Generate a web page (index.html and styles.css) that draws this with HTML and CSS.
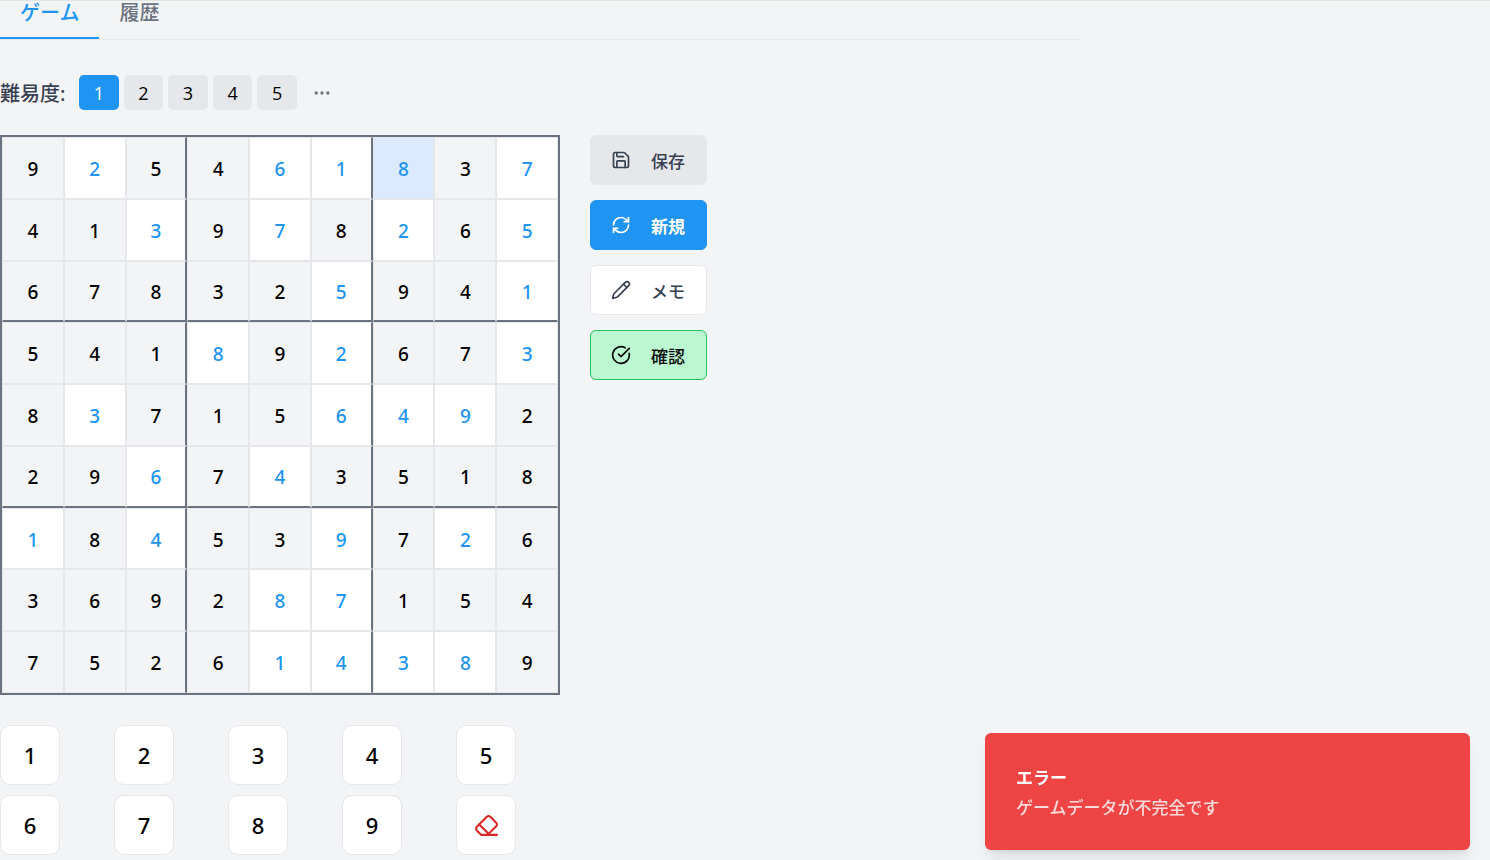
FILE: index.html
```html
<!DOCTYPE html>
<html lang="ja">
<head>
<meta charset="utf-8">
<meta name="viewport" content="width=device-width, initial-scale=1">
<title>数独</title>
<link rel="stylesheet" href="styles.css">
</head>
<body>
<div class="app">
  <nav class="tabs" role="tablist">
    <button class="tab tab-active" role="tab" aria-selected="true">ゲーム</button>
    <button class="tab" role="tab" aria-selected="false">履歴</button>
  </nav>

  <section class="difficulty" aria-labelledby="difficulty-label">
    <span id="difficulty-label" class="difficulty-label">難易度:</span>
    <div class="levels">
      <button class="level level-active">1</button>
      <button class="level">2</button>
      <button class="level">3</button>
      <button class="level">4</button>
      <button class="level">5</button>
    </div>
    <button class="more" aria-label="その他">
      <svg class="icon" viewBox="0 0 24 24"><circle cx="5" cy="12" r="1"/><circle cx="12" cy="12" r="1"/><circle cx="19" cy="12" r="1"/></svg>
    </button>
  </section>

  <main class="game">
    <div class="play">
      <div class="board">
        <button class="cell">9</button><button class="cell user">2</button><button class="cell">5</button><button class="cell">4</button><button class="cell user">6</button><button class="cell user">1</button><button class="cell user selected">8</button><button class="cell">3</button><button class="cell user">7</button>
        <button class="cell">4</button><button class="cell">1</button><button class="cell user">3</button><button class="cell">9</button><button class="cell user">7</button><button class="cell">8</button><button class="cell user">2</button><button class="cell">6</button><button class="cell user">5</button>
        <button class="cell">6</button><button class="cell">7</button><button class="cell">8</button><button class="cell">3</button><button class="cell">2</button><button class="cell user">5</button><button class="cell">9</button><button class="cell">4</button><button class="cell user">1</button>
        <button class="cell">5</button><button class="cell">4</button><button class="cell">1</button><button class="cell user">8</button><button class="cell">9</button><button class="cell user">2</button><button class="cell">6</button><button class="cell">7</button><button class="cell user">3</button>
        <button class="cell">8</button><button class="cell user">3</button><button class="cell">7</button><button class="cell">1</button><button class="cell">5</button><button class="cell user">6</button><button class="cell user">4</button><button class="cell user">9</button><button class="cell">2</button>
        <button class="cell">2</button><button class="cell">9</button><button class="cell user">6</button><button class="cell">7</button><button class="cell user">4</button><button class="cell">3</button><button class="cell">5</button><button class="cell">1</button><button class="cell">8</button>
        <button class="cell user">1</button><button class="cell">8</button><button class="cell user">4</button><button class="cell">5</button><button class="cell">3</button><button class="cell user">9</button><button class="cell">7</button><button class="cell user">2</button><button class="cell">6</button>
        <button class="cell">3</button><button class="cell">6</button><button class="cell">9</button><button class="cell">2</button><button class="cell user">8</button><button class="cell user">7</button><button class="cell">1</button><button class="cell">5</button><button class="cell">4</button>
        <button class="cell">7</button><button class="cell">5</button><button class="cell">2</button><button class="cell">6</button><button class="cell user">1</button><button class="cell user">4</button><button class="cell user">3</button><button class="cell user">8</button><button class="cell">9</button>
      </div>
      <div class="pad">
        <button class="key">1</button>
        <button class="key">2</button>
        <button class="key">3</button>
        <button class="key">4</button>
        <button class="key">5</button>
        <button class="key">6</button>
        <button class="key">7</button>
        <button class="key">8</button>
        <button class="key">9</button>
        <button class="key key-erase" aria-label="消去">
          <svg class="icon icon-large" viewBox="0 0 24 24"><path d="m7 21-4.3-4.3c-1-1-1-2.5 0-3.4l9.6-9.6c1-1 2.5-1 3.4 0l5.6 5.6c1 1 1 2.5 0 3.4L13 21"/><path d="M22 21H7"/><path d="m5 11 9 9"/></svg>
        </button>
      </div>
    </div>

    <div class="actions">
      <button class="action action-save">
        <svg class="icon" viewBox="0 0 24 24"><path d="M15.2 3a2 2 0 0 1 1.4.6l3.8 3.8a2 2 0 0 1 .6 1.4V19a2 2 0 0 1-2 2H5a2 2 0 0 1-2-2V5a2 2 0 0 1 2-2z"/><path d="M17 21v-7a1 1 0 0 0-1-1H8a1 1 0 0 0-1 1v7"/><path d="M7 3v4a1 1 0 0 0 1 1h7"/></svg>
        保存
      </button>
      <button class="action action-new">
        <svg class="icon" viewBox="0 0 24 24"><path d="M3 12a9 9 0 0 1 9-9 9.75 9.75 0 0 1 6.74 2.74L21 8"/><path d="M21 3v5h-5"/><path d="M21 12a9 9 0 0 1-9 9 9.75 9.75 0 0 1-6.74-2.74L3 16"/><path d="M8 16H3v5"/></svg>
        新規
      </button>
      <button class="action action-memo">
        <svg class="icon" viewBox="0 0 24 24"><path d="M21.174 6.812a1 1 0 0 0-3.986-3.987L3.842 16.174a2 2 0 0 0-.5.83l-1.321 4.352a.5.5 0 0 0 .623.622l4.353-1.32a2 2 0 0 0 .83-.497z"/><path d="m15 5 4 4"/></svg>
        メモ
      </button>
      <button class="action action-check">
        <svg class="icon" viewBox="0 0 24 24"><path d="M21.801 10A10 10 0 1 1 17 3.335"/><path d="m9 11 3 3L22 4"/></svg>
        確認
      </button>
    </div>
  </main>
</div>

<div class="toast" role="alert">
  <strong class="toast-title">エラー</strong>
  <span class="toast-text">ゲームデータが不完全です</span>
</div>
</body>
</html>
```
FILE: styles.css
```css
* {
  box-sizing: border-box;
}

body {
  margin: 0;
  border-top: 1px solid #e2e3e3;
  background: #f3f4f6;
  color: #000000;
  font-family: "Noto Sans", "Noto Sans CJK JP", sans-serif;
  font-size: 20px;
}

button {
  margin: 0;
  padding: 0;
  border: 0;
  background: none;
  color: inherit;
  font: inherit;
  cursor: pointer;
}

.app {
  max-width: 1080px;
}

.icon {
  width: 20px;
  height: 20px;
  flex: none;
  fill: none;
  stroke: currentColor;
  stroke-width: 2;
  stroke-linecap: round;
  stroke-linejoin: round;
}

.icon-large {
  width: 25px;
  height: 25px;
}

.tabs {
  display: flex;
  border-bottom: 1px solid #e5e7eb;
}

.tab {
  padding: 0 20px 12px;
  border-bottom: 2px solid transparent;
  color: #6b7280;
  font-weight: 500;
  line-height: 24px;
}

.tab-active {
  border-color: #2094f3;
  color: #2094f3;
}

.difficulty {
  display: flex;
  align-items: center;
  margin: 35px 0 25px;
}

.difficulty-label {
  width: 79px;
  padding-top: 2px;
  color: #374151;
  font-weight: 500;
  line-height: 33px;
}

.levels {
  display: flex;
  gap: 5px;
  width: 218px;
}

.level {
  flex: 1;
  height: 35px;
  border-radius: 5px;
  background: #e5e7eb;
  font-family: "Open Sans", "Noto Sans", sans-serif;
  font-size: 18px;
}

.level-active {
  background: #2094f3;
  color: #ffffff;
}

.more {
  display: flex;
  padding: 0 15px;
  color: #6b7280;
}

.game {
  display: flex;
  align-items: flex-start;
  gap: 30px;
}

.play {
  flex: 0 1 560px;
}

.board {
  display: grid;
  grid-template-columns: repeat(9, 1fr);
  grid-template-rows: repeat(9, 1fr);
  aspect-ratio: 1;
  border: 2px solid #6b7280;
}

.cell {
  padding-top: 2px;
  border: 1px solid #e5e7eb;
  background: #f3f4f6;
  font-size: 19px;
  font-weight: 500;
}

.user {
  background: #ffffff;
  color: #2094f3;
}

.selected {
  background: #dbeafe;
}

.cell:nth-child(9n + 3),
.cell:nth-child(9n + 6) {
  border-right: 2px solid #6b7280;
}

.cell:nth-child(n + 19):nth-child(-n + 27),
.cell:nth-child(n + 46):nth-child(-n + 54) {
  border-bottom: 2px solid #6b7280;
}

.pad {
  display: grid;
  grid-template-columns: repeat(5, 1fr);
  gap: 10px;
  margin-top: 30px;
}

.key {
  display: flex;
  align-items: center;
  justify-content: center;
  width: 60px;
  height: 60px;
  border: 1px solid #e5e7eb;
  border-radius: 10px;
  background: #ffffff;
  font-size: 22px;
  font-weight: 500;
}

.key-erase {
  color: #dc2626;
}

.actions {
  display: grid;
  gap: 15px;
}

.action {
  display: flex;
  align-items: center;
  gap: 20px;
  min-width: 117px;
  height: 50px;
  padding: 0 20px;
  border: 1px solid #e5e7eb;
  border-radius: 6px;
  background: #ffffff;
  color: #374151;
  font-size: 17px;
  font-weight: 500;
}

.action-save {
  background: #e5e7eb;
}

.action-new {
  border-color: #2094f3;
  background: #2094f3;
  color: #ffffff;
  font-weight: 700;
}

.action-check {
  border-color: #22c55e;
  background: #bbf7d0;
  color: #0a0a0a;
}

.toast {
  position: fixed;
  right: 20px;
  bottom: 10px;
  display: grid;
  gap: 5px;
  width: 485px;
  max-width: calc(100% - 40px);
  padding: 32px 31px 30px;
  border-radius: 6px;
  background: #ef4444;
  box-shadow: 0 10px 15px -3px rgb(0 0 0 / 0.1), 0 4px 6px -4px rgb(0 0 0 / 0.1);
  color: #ffffff;
  font-size: 17px;
  line-height: 25px;
}

.toast-title {
  font-weight: 700;
}

.toast-text {
  font-weight: 500;
  opacity: 0.8;
}
```
